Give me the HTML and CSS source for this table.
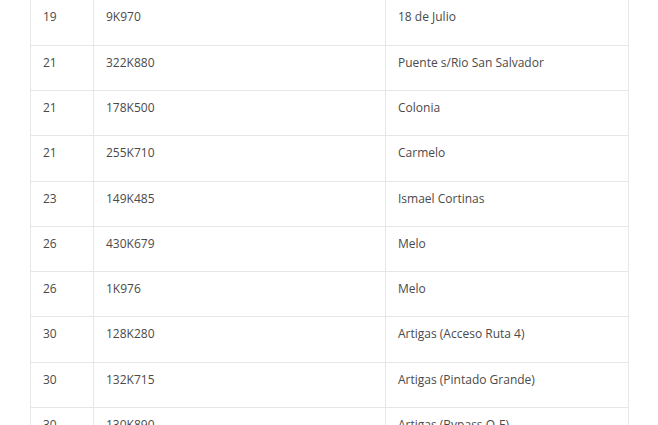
FILE: index.html
```html
<!DOCTYPE html>
<html>
<head>
<meta charset="utf-8">
<link rel="stylesheet" href="styles.css">
</head>
<body>
<div class="wrap">
<table class="tbl">
<colgroup><col class="c1"><col class="c2"><col class="c3"></colgroup>
<tbody>
<tr><td>19</td><td>9K970</td><td>18 de Julio</td></tr>
<tr><td>21</td><td>322K880</td><td>Puente s/Rio San Salvador</td></tr>
<tr><td>21</td><td>178K500</td><td>Colonia</td></tr>
<tr><td>21</td><td>255K710</td><td>Carmelo</td></tr>
<tr><td>23</td><td>149K485</td><td>Ismael Cortinas</td></tr>
<tr><td>26</td><td>430K679</td><td>Melo</td></tr>
<tr><td>26</td><td>1K976</td><td>Melo</td></tr>
<tr><td>30</td><td>128K280</td><td>Artigas (Acceso Ruta 4)</td></tr>
<tr><td>30</td><td>132K715</td><td>Artigas (Pintado Grande)</td></tr>
<tr><td>30</td><td>130K890</td><td>Artigas (Bypass O-E)</td></tr>
</tbody>
</table>
</div>
</body>
</html>
```
FILE: styles.css
```css
html, body {
  margin: 0;
  padding: 0;
  background: #fff;
  overflow: hidden;
}
.wrap {
  padding-left: 30px;
}
.tbl {
  border-collapse: collapse;
  width: 598px;
  table-layout: fixed;
  font-family: "Open Sans", sans-serif;
  font-size: 12px;
  color: #4a4a4a;
}
.c1 { width: 63px; }
.c2 { width: 292px; }
.c3 { width: 243px; }
.tbl td {
  border: 1px solid #e6e6e6;
  height: 45.25px;
  box-sizing: border-box;
  padding: 7px 12px 0 12px;
  vertical-align: top;
  line-height: 20px;
}
.tbl tr:first-child td {
  border-top: none;
}
```
